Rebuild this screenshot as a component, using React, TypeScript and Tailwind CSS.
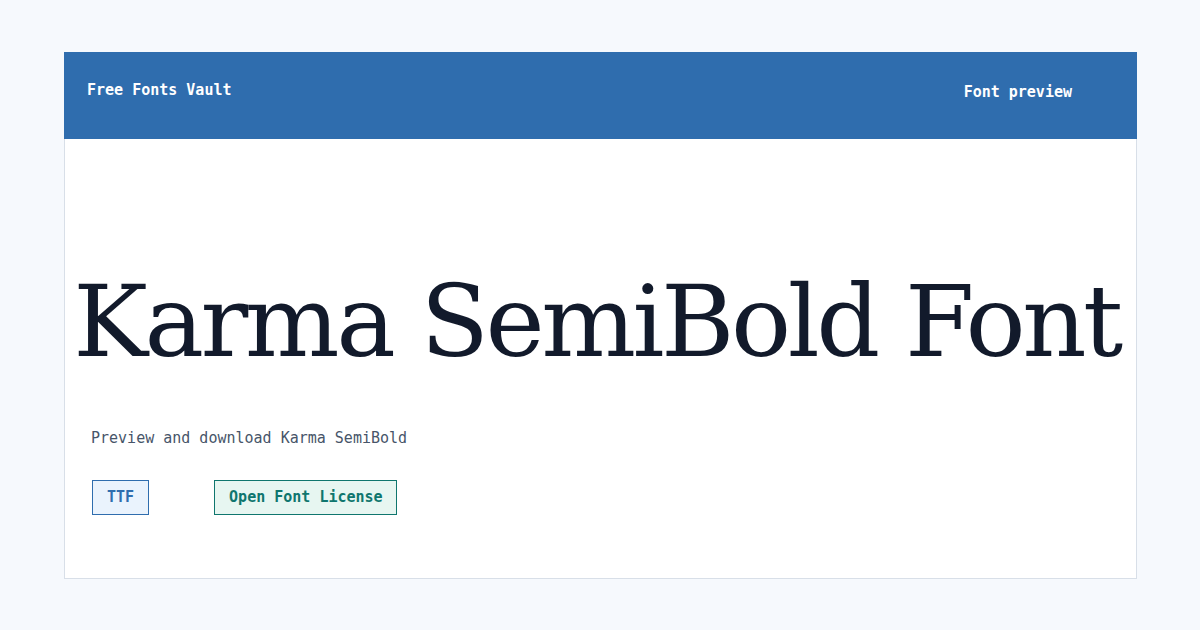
export default function App() {
  return (
    <div className="h-[630px] w-[1200px] bg-[#f6f9fd] px-[64px] pt-[52px]">
      <div className="flex h-[527px] w-[1073px] flex-col bg-white">
        <header className="flex h-[87px] shrink-0 items-start justify-between bg-[#2f6dae] pl-[23px] pr-[65px] pt-[27px] font-['DejaVu_Sans_Mono',monospace] text-[15px] font-bold leading-[22px] text-white">
          <span>Free Fonts Vault</span>
          <span className="mt-[2px]">Font preview</span>
        </header>
        <main className="flex flex-1 flex-col border border-t-0 border-[#d8dfe8]">
          <h1 className="mt-[133px] whitespace-nowrap pr-[8px] text-center font-['DejaVu_Serif',serif] text-[100px] font-normal leading-[100px] tracking-[-3.5px] text-[#121a2b]">
            Karma SemiBold Font
          </h1>
          <div className="flex flex-col items-start pl-[26px] font-['DejaVu_Sans_Mono',monospace] text-[15px]">
            <p className="mt-[55px] leading-[22px] text-[#475569]">Preview and download Karma SemiBold</p>
            <div className="ml-[1px] mt-[31px] flex items-start gap-[65px] font-bold leading-[21px]">
              <span className="border border-[#2f6dae] bg-[#eaf3fd] px-[14px] py-[6px] text-[#2f6dae]">TTF</span>
              <span className="border border-[#0f766e] bg-[#e7f6f1] pl-[14px] pr-[13px] py-[6px] text-[#0f766e]">Open Font License</span>
            </div>
          </div>
        </main>
      </div>
    </div>
  );
}
